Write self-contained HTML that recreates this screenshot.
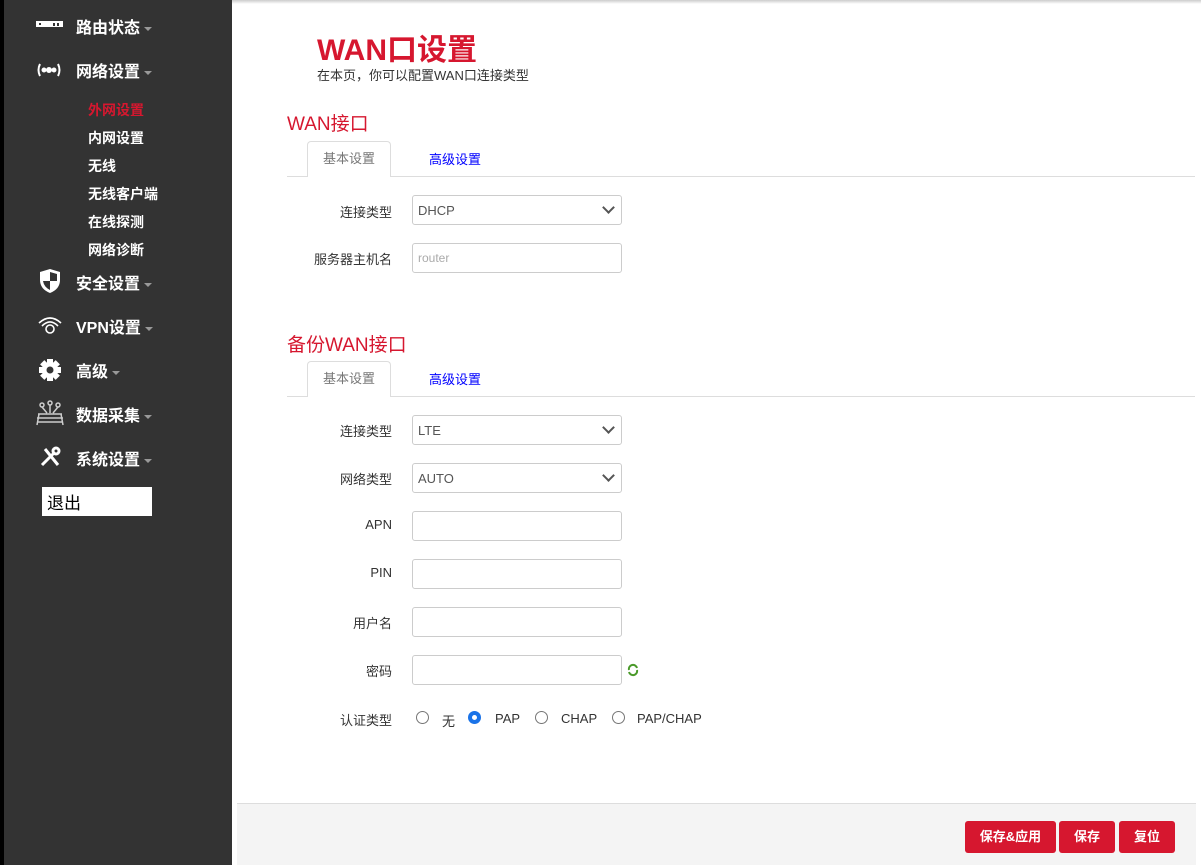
<!DOCTYPE html>
<html><head><meta charset="utf-8"><style>
*{margin:0;padding:0;box-sizing:border-box}
body{width:1201px;height:865px;overflow:hidden;background:#fff;font-family:"Liberation Sans","Noto Sans CJK SC",sans-serif;position:relative}
.side{position:absolute;left:0;top:0;width:232px;height:865px;background:#333}
.strip{position:absolute;left:0;top:0;width:4px;height:865px;background:#000}
.a{position:absolute;color:#fff}
.m{font-size:16px;font-weight:bold;left:76px}
.car{display:inline-block;width:0;height:0;border-left:4px solid transparent;border-right:4px solid transparent;border-top:4px solid #999;margin-left:4px;vertical-align:middle}
.s{font-size:14px;left:88px;font-weight:bold}
.ic{position:absolute;left:36px}
.t{position:absolute;color:#d6172f}
.lb{position:absolute;font-size:13px;color:#333;text-align:right;width:112px;left:280px}
.in{position:absolute;left:412px;width:210px;height:30px;border:1px solid #ccc;border-radius:3px;font-size:13px;color:#555;padding:7px 5px}
.sel::after{content:"";position:absolute;right:8px;top:7px;width:7px;height:7px;border-right:2px solid #555;border-bottom:2px solid #555;transform:rotate(45deg)}
.tab{position:absolute;left:307px;width:84px;height:36px;border:1px solid #ddd;border-bottom:none;border-radius:4px 4px 0 0;background:#fff;font-size:13px;color:#777;text-align:center;line-height:34px}
.tab2{position:absolute;left:429px;font-size:13px;color:#00f}
.hr{position:absolute;left:287px;width:908px;height:1px;background:#ddd}
.r{position:absolute;width:13px;height:13px;border:1px solid #767676;border-radius:50%;background:#fff}
.btn{position:absolute;top:821px;height:32px;background:#d6172f;color:#fff;font-size:13px;font-weight:bold;border-radius:3px;text-align:center;line-height:32px}
</style></head><body>
<div class="side">
<div class="strip"></div>
<svg class="ic" style="top:20px" width="28" height="10"><rect x="0" y="1" width="27" height="6" fill="#fff"/><rect x="3" y="3" width="2" height="2" fill="#333"/><rect x="17" y="3" width="2" height="3" fill="#333"/><rect x="21" y="3" width="2" height="3" fill="#333"/></svg>
<div class="a m" style="top:14px">路由状态<span class="car"></span></div>
<svg class="ic" style="top:61px" width="26" height="18" fill="none" stroke="#fff" stroke-width="2"><circle cx="13" cy="9" r="2" fill="#fff"/><circle cx="8" cy="9" r="1.5" fill="#fff"/><circle cx="18" cy="9" r="1.5" fill="#fff"/><path d="M4 3Q1 9 4 15M22 3Q25 9 22 15"/></svg>
<div class="a m" style="top:58px">网络设置<span class="car"></span></div>
<div class="a s" style="top:100px;color:#d6172f">外网设置</div>
<div class="a s" style="top:128px">内网设置</div>
<div class="a s" style="top:156px">无线</div>
<div class="a s" style="top:184px">无线客户端</div>
<div class="a s" style="top:212px">在线探测</div>
<div class="a s" style="top:240px">网络诊断</div>
<svg class="ic" style="top:268px;left:38px" width="24" height="26"><path d="M12 1L22 4V12Q22 21 12 25Q2 21 2 12V4Z" fill="#fff"/><path d="M12 4L19 6V13H12ZM12 13H5Q6 19 12 22Z" fill="#333"/></svg>
<div class="a m" style="top:270px">安全设置<span class="car"></span></div>
<svg class="ic" style="top:314px;left:37px" width="26" height="20" fill="none" stroke="#fff" stroke-width="1.6"><path d="M2 9Q13 -1 24 9M5 12Q13 4 21 12"/><circle cx="13" cy="15" r="4"/></svg>
<div class="a m" style="top:314px">VPN设置<span class="car"></span></div>
<svg class="ic" style="top:358px;left:38px" width="24" height="24"><g fill="#fff"><circle cx="12" cy="12" r="8"/><rect x="9" y="1" width="6" height="22"/><rect x="1" y="9" width="22" height="6"/><rect x="9" y="1" width="6" height="22" transform="rotate(45 12 12)"/><rect x="9" y="1" width="6" height="22" transform="rotate(-45 12 12)"/></g><circle cx="12" cy="12" r="3.5" fill="#333"/></svg>
<div class="a m" style="top:358px">高级<span class="car"></span></div>
<svg class="ic" style="top:400px" width="28" height="26" fill="none" stroke="#ccc" stroke-width="1.5"><circle cx="6" cy="5" r="2"/><circle cx="14" cy="3" r="2"/><circle cx="22" cy="5" r="2"/><path d="M6 7L11 13M14 5V13M22 7L17 13M2 14H26M1 18H27M1 22H27M3 14L1 25M25 14L27 25"/></svg>
<div class="a m" style="top:402px">数据采集<span class="car"></span></div>
<svg class="ic" style="top:445px;left:38px" width="24" height="24" stroke="#fff" stroke-width="3" fill="none"><path d="M4 20L17 7M7 4L20 20"/><circle cx="18" cy="6" r="3"/></svg>
<div class="a m" style="top:446px">系统设置<span class="car"></span></div>
<div style="position:absolute;left:42px;top:487px;width:110px;height:29px;background:#fff;color:#000;font-size:17px;padding:2px 5px">退出</div>
</div>
<div style="position:absolute;left:232px;top:0;width:969px;height:4px;background:linear-gradient(#ccc,#fff)"></div>
<div class="t" style="left:317px;top:25px;font-size:30px;font-weight:bold">WAN口设置</div>
<div style="position:absolute;left:317px;top:65px;font-size:13px;color:#333">在本页，你可以配置WAN口连接类型</div>
<div class="t" style="left:287px;top:109px;font-size:19px">WAN接口</div>
<div class="hr" style="top:176px"></div>
<div class="tab" style="top:141px">基本设置</div>
<div class="tab2" style="top:149px">高级设置</div>
<div class="lb" style="top:202px">连接类型</div>
<div class="in sel" style="top:195px">DHCP</div>
<div class="lb" style="top:249px">服务器主机名</div>
<div class="in" style="top:243px;color:#aaa;font-size:12px">router</div>
<div class="t" style="left:287px;top:330px;font-size:19px">备份WAN接口</div>
<div class="hr" style="top:396px"></div>
<div class="tab" style="top:361px">基本设置</div>
<div class="tab2" style="top:369px">高级设置</div>
<div class="lb" style="top:421px">连接类型</div><div class="in sel" style="top:415px">LTE</div>
<div class="lb" style="top:469px">网络类型</div><div class="in sel" style="top:463px">AUTO</div>
<div class="lb" style="top:517px">APN</div><div class="in" style="top:511px"></div>
<div class="lb" style="top:565px">PIN</div><div class="in" style="top:559px"></div>
<div class="lb" style="top:613px">用户名</div><div class="in" style="top:607px"></div>
<div class="lb" style="top:661px">密码</div><div class="in" style="top:655px"></div>
<svg style="position:absolute;left:627px;top:663px" width="12" height="14" fill="none" stroke="#4a9a2a" stroke-width="2"><path d="M2 7A4 4 0 0 1 10 5M10 7A4 4 0 0 1 2 9"/></svg>
<div class="lb" style="top:710px">认证类型</div>
<div class="r" style="left:416px;top:711px"></div><div style="position:absolute;left:442px;top:711px;font-size:13px;color:#333">无</div>
<div class="r" style="left:468px;top:711px;border:4px solid #1a73e8"></div><div style="position:absolute;left:495px;top:711px;font-size:13px;color:#333">PAP</div>
<div class="r" style="left:535px;top:711px"></div><div style="position:absolute;left:561px;top:711px;font-size:13px;color:#333">CHAP</div>
<div class="r" style="left:612px;top:711px"></div><div style="position:absolute;left:637px;top:711px;font-size:13px;color:#333">PAP/CHAP</div>
<div style="position:absolute;left:237px;top:803px;width:959px;height:62px;background:#f4f4f4;border-top:1px solid #ddd"></div>
<div class="btn" style="left:965px;width:91px">保存&amp;应用</div>
<div class="btn" style="left:1059px;width:56px">保存</div>
<div class="btn" style="left:1119px;width:56px">复位</div>
</body></html>
